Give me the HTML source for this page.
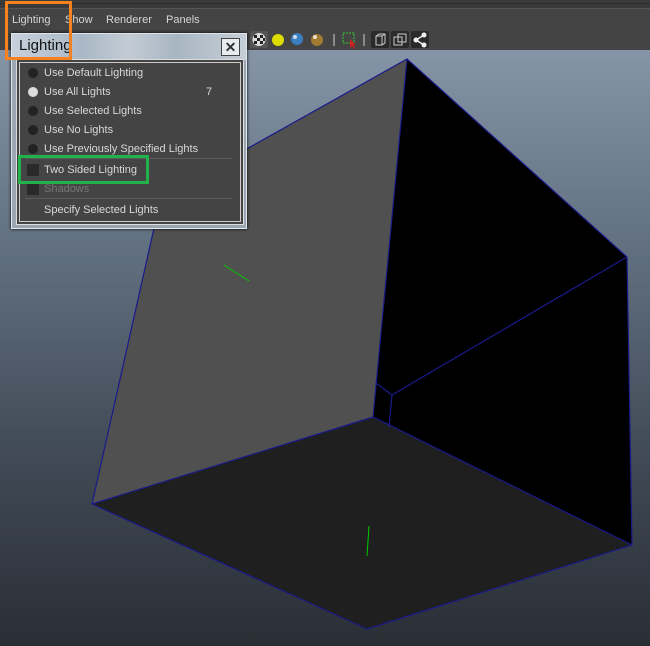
<!DOCTYPE html>
<html><head><style>
body{margin:0;width:650px;height:646px;overflow:hidden;position:relative;font-family:"Liberation Sans",sans-serif;background:#444;}
.abs{position:absolute;}
.mi{position:absolute;top:14px;font-size:11px;color:#d6d6d6;}
.item{position:absolute;left:44px;font-size:11px;color:#d8d8d8;}
.dot{position:absolute;left:28px;width:10px;height:10px;border-radius:50%;background:#222;}
.cb{position:absolute;left:27px;width:12px;height:12px;background:#2a2a2a;}
</style></head><body>
<div class="abs" style="left:0;top:0;width:650px;height:8px;background:#3a3a3a;border-bottom:1px solid #555"></div>
<div class="abs" style="left:0;top:3px;width:650px;height:1px;background:#2e2e2e"></div>
<span class="mi" style="left:12px">Lighting</span>
<span class="mi" style="left:65px">Show</span>
<span class="mi" style="left:106px">Renderer</span>
<span class="mi" style="left:166px">Panels</span>
<div class="abs" style="left:0;top:50px;width:650px;height:596px;background:linear-gradient(#8595a7,#5f6e7e 35%,#3f4854 70%,#2a2e35)"></div>
<svg class="abs" style="left:0;top:0" width="650" height="646">
<polygon points="407,59 627,257 632,545 373,417" fill="#000"/>
<polygon points="407,59 161,197 92,504 373,417" fill="#505050"/>
<polygon points="373,417 92,504 367,629 632,545" fill="#1f1f1f"/>
<g stroke="#1a1a8a" stroke-width="1.2" fill="none">
<polyline points="161,197 407,59 627,257 632,545 367,629 92,504 161,197"/>
<line x1="407" y1="59" x2="373" y2="417"/>
<line x1="373" y1="417" x2="92" y2="504"/>
<line x1="373" y1="417" x2="632" y2="545"/>
<line x1="627" y1="257" x2="392" y2="395"/>
<line x1="392" y1="395" x2="389" y2="427"/>
<line x1="376" y1="383" x2="392" y2="395"/>
</g>
<line x1="224" y1="265" x2="249" y2="281" stroke="#0c0" stroke-width="1"/>
<line x1="369" y1="526" x2="367" y2="556" stroke="#0c0" stroke-width="1"/>
<rect x="250" y="31" width="18" height="17" rx="2" fill="#555"/>
<circle cx="259" cy="39.5" r="6.5" fill="#ddd"/>
<g fill="#222"><rect x="254" y="35" width="3" height="3"/><rect x="260" y="35" width="3" height="3"/><rect x="257" y="38" width="3" height="3"/><rect x="263" y="38" width="2" height="3"/><rect x="254" y="41" width="3" height="3"/><rect x="260" y="41" width="3" height="3"/></g>
<circle cx="278" cy="40" r="6" fill="#dd0"/>
<circle cx="297" cy="39" r="6" fill="#3a7fc0"/><circle cx="295" cy="37" r="2" fill="#cde"/>
<circle cx="317" cy="40" r="6" fill="#a07a30"/><circle cx="315" cy="37" r="2" fill="#edc"/>
<rect x="333" y="34" width="2" height="12" fill="#888"/>
<rect x="343" y="33" width="11" height="10" fill="none" stroke="#3c3" stroke-dasharray="2 1"/>
<path d="M350 39 l0 9 l2-2 l2 3 l1-1 l-2-3 l3 0z" fill="#c22"/>
<rect x="363" y="34" width="2" height="12" fill="#888"/>
<rect x="371" y="31" width="18" height="17" rx="2" fill="#2a2a2a"/><path d="M376 36 l3-2 h6 v9 l-3 2 h-6z M376 36 h6 v9 M382 36 l3-2" fill="none" stroke="#ccc"/>
<rect x="391" y="31" width="18" height="17" rx="2" fill="#2a2a2a"/><rect x="394" y="37" width="8" height="8" fill="none" stroke="#ccc"/><rect x="398" y="34" width="8" height="8" fill="none" stroke="#ccc"/>
<rect x="411" y="31" width="18" height="17" rx="2" fill="#2a2a2a"/><circle cx="416" cy="40" r="2.5" fill="#eee"/><circle cx="424" cy="35" r="2.5" fill="#eee"/><circle cx="424" cy="45" r="2.5" fill="#eee"/><path d="M416 40 L424 35 M416 40 L424 45" stroke="#eee" stroke-width="1.5"/>
</svg>
<div class="abs" style="left:11px;top:33px;width:234px;height:194px;background:#9aa6b2;border:1px solid #dfe6ee;box-shadow:0 0 3px #000"></div>
<div class="abs" style="left:12px;top:34px;width:234px;height:26px;background:linear-gradient(90deg,#c7d0da,#a9b8c6 30%,#c3ccd4 50%,#a8b6c2 70%,#c6ced6)"></div>
<div class="abs" style="left:19px;top:37px;font-size:15px;color:#111">Lighting</div>
<div class="abs" style="left:221px;top:38px;width:17px;height:16px;background:#e8ecf0;border:1px solid #444;font-size:14px;font-weight:bold;text-align:center;line-height:16px;color:#333">✕</div>
<div class="abs" style="left:16px;top:59px;width:226px;height:164px;background:#444;border:1px solid #ddd"></div>
<div class="abs" style="left:19px;top:62px;width:220px;height:158px;border:1px solid #ccc"></div>
<div class="dot" style="top:68px"></div><span class="item" style="top:67px">Use Default Lighting</span>
<div class="dot" style="top:87px;background:#ddd"></div><span class="item" style="top:86px">Use All Lights</span><span class="item" style="left:206px;top:86px">7</span>
<div class="dot" style="top:106px"></div><span class="item" style="top:105px">Use Selected Lights</span>
<div class="dot" style="top:125px"></div><span class="item" style="top:124px">Use No Lights</span>
<div class="dot" style="top:144px"></div><span class="item" style="top:143px">Use Previously Specified Lights</span>
<div class="abs" style="left:25px;top:158px;width:207px;height:1px;background:#5a5a5a"></div>
<div class="cb" style="top:164px"></div><span class="item" style="top:164px">Two Sided Lighting</span>
<div class="cb" style="top:183px"></div><span class="item" style="top:183px;color:#777">Shadows</span>
<div class="abs" style="left:25px;top:198px;width:207px;height:1px;background:#5a5a5a"></div>
<span class="item" style="top:204px">Specify Selected Lights</span>
<div class="abs" style="left:5px;top:1px;width:67px;height:59px;border:3px solid #f5821f;box-sizing:border-box"></div>
<div class="abs" style="left:18px;top:155px;width:131px;height:29px;border:3px solid #22b24c;box-sizing:border-box"></div>
</body></html>
